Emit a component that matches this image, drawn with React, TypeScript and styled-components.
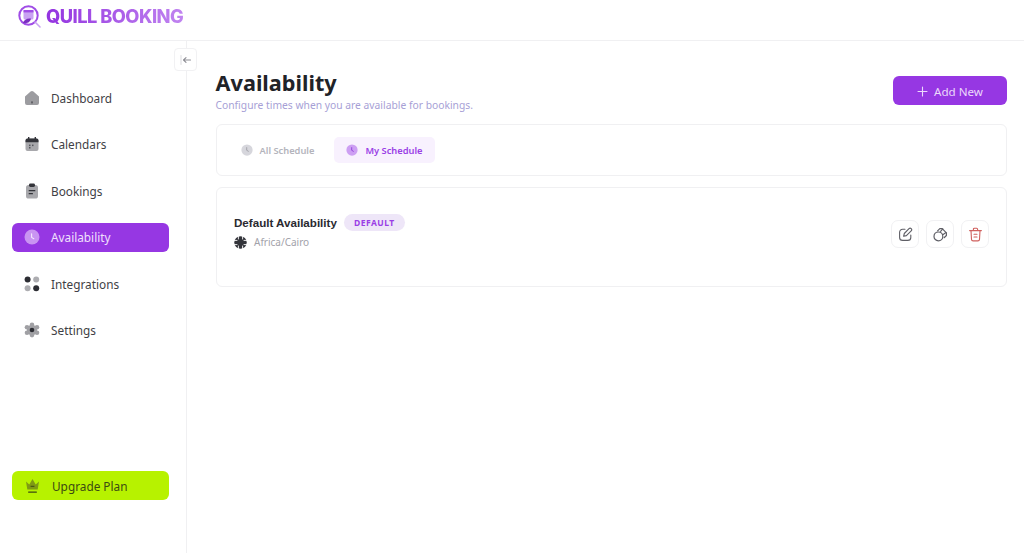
import React from 'react';
import styled, { createGlobalStyle } from 'styled-components';

const GlobalStyle = createGlobalStyle`
  html, body {
    margin: 0;
    padding: 0;
    background: #ffffff;
  }
  * {
    box-sizing: border-box;
  }
  body {
    font-family: 'Noto Sans', sans-serif;
  }
`;

const Page = styled.div`
  width: 1024px;
  height: 553px;
  display: flex;
  flex-direction: column;
  overflow: hidden;
`;
const Header = styled.header`
  height: 41px;
  flex: none;
  display: flex;
  align-items: flex-start;
  padding: 4px 0 0 17px;
  gap: 3px;
  border-bottom: 1px solid #f0f0f2;
`;
const LogoText = styled.span`
  font-family: 'Inter', sans-serif;
  font-weight: 800;
  font-size: 18.3px;
  line-height: 24px;
  letter-spacing: -0.55px;
  background: linear-gradient(90deg, #9333e0 0%, #c084f0 100%);
  -webkit-background-clip: text;
  background-clip: text;
  color: transparent;
`;
const Body = styled.div`
  flex: 1;
  display: flex;
  min-height: 0;
`;
const Sidebar = styled.aside`
  position: relative;
  width: 187px;
  flex: none;
  display: flex;
  flex-direction: column;
  justify-content: space-between;
  padding: 43px 17.5px 53px 12px;
  border-right: 1px solid #f0f0f2;
`;
const Collapse = styled.button`
  position: absolute;
  top: 7px;
  right: -11px;
  width: 23px;
  height: 23px;
  padding: 0;
  display: flex;
  align-items: center;
  justify-content: center;
  background: #ffffff;
  border: 1px solid #f1f1f3;
  border-radius: 4px;
`;
const Nav = styled.nav`
  display: flex;
  flex-direction: column;
  gap: 17.4px;
`;
const NavItem = styled.a<{ $active?: boolean }>`
  height: 29px;
  display: flex;
  align-items: center;
  gap: 11px;
  padding: 0 0 1px 12px;
  border-radius: 6px;
  font-size: 11.8px;
  color: ${(p) => (p.$active ? '#f0e0fc' : '#3f3f46')};
  background: ${(p) => (p.$active ? '#9637e3' : 'transparent')};
`;
const Upgrade = styled.a`
  height: 29px;
  display: flex;
  align-items: center;
  gap: 12px;
  padding-left: 13px;
  border-radius: 6px;
  font-size: 11.8px;
  color: #3c4a12;
  background: #b7f200;
`;
const Main = styled.main`
  flex: 1;
  padding: 27px 17px 0 28.5px;
  min-width: 0;
`;
const TitleRow = styled.div`
  display: flex;
  justify-content: space-between;
  align-items: flex-start;
  height: 56px;
`;
const Heading = styled.div`
  display: flex;
  flex-direction: column;
`;
const Title = styled.h1`
  margin: 0;
  font-size: 21.7px;
  line-height: 30px;
  font-weight: 700;
  color: #1f2328;
`;
const Subtitle = styled.p`
  margin: 0;
  font-size: 10.3px;
  line-height: 15px;
  color: #a79fd6;
`;
const AddButton = styled.button`
  width: 114px;
  height: 29px;
  margin-top: 8px;
  padding: 1px 0 0 0;
  display: flex;
  align-items: center;
  justify-content: center;
  gap: 6px;
  border: none;
  border-radius: 6px;
  background: #9637e3;
  color: #ecd9fb;
  font-family: 'Noto Sans', sans-serif;
  font-size: 11.6px;
`;
const Card = styled.section`
  background: #ffffff;
  border: 1px solid #f0f0f2;
  border-radius: 6px;
`;
const TabsCard = styled(Card)`
  height: 52px;
  display: flex;
  align-items: center;
  gap: 8px;
  padding-left: 12px;
`;
const Tab = styled.button<{ $active?: boolean }>`
  height: 26px;
  display: flex;
  align-items: center;
  gap: 7px;
  padding: 0 12px;
  border: none;
  border-radius: 5px;
  font-family: 'Noto Sans', sans-serif;
  font-size: 9.3px;
  font-weight: 600;
  color: ${(p) => (p.$active ? '#9a3fe6' : '#b4b4bc')};
  background: ${(p) => (p.$active ? '#f8f1fe' : 'transparent')};
`;
const ScheduleCard = styled(Card)`
  height: 100px;
  margin-top: 11px;
  display: flex;
  justify-content: space-between;
  align-items: flex-start;
  padding: 26px 17px 0 17.5px;
`;
const ScheduleInfo = styled.div`
  display: flex;
  flex-direction: column;
  gap: 4px;
`;
const NameRow = styled.div`
  display: flex;
  align-items: center;
  gap: 7px;
`;
const Name = styled.span`
  font-family: 'Liberation Sans', Arial, sans-serif;
  font-size: 11.6px;
  font-weight: 700;
  color: #2a2a30;
`;
const Badge = styled.span`
  height: 17px;
  width: 61px;
  display: flex;
  align-items: center;
  justify-content: center;
  border-radius: 9px;
  background: #eee6f8;
  color: #9a3fe6;
  font-size: 8.5px;
  font-weight: 700;
  letter-spacing: 0.5px;
`;
const ZoneRow = styled.div`
  display: flex;
  align-items: center;
  gap: 7px;
  font-size: 10px;
  color: #a2a2aa;
`;
const Actions = styled.div`
  display: flex;
  align-items: center;
  gap: 7px;
  margin-top: 6px;
`;
const IconButton = styled.button`
  width: 28px;
  height: 28px;
  padding: 0;
  display: flex;
  align-items: center;
  justify-content: center;
  background: #ffffff;
  border: 1px solid #f1f1f3;
  border-radius: 7px;
`;

function LogoMark() {
  return (
    <svg width="26" height="26" viewBox="0 0 26 26" fill="none">
      <circle cx="11.5" cy="11.5" r="9.2" stroke="#a04de6" strokeWidth="2" />
      <rect x="6.5" y="6" width="10" height="9.5" rx="1.5" fill="#c9a2f2" />
      <rect x="6.5" y="6" width="10" height="2.4" fill="#a04de6" />
      <path d="M6 19c1-3.5 4-5 8-4.5-.5 3-3 5.5-8 4.5Z" fill="#7b2fc0" />
      <path d="M18 18l5 5" stroke="#c9a2f2" strokeWidth="1.6" strokeLinecap="round" />
    </svg>
  );
}

function ClockIcon({ bg, hand, size = 16 }: { bg: string; hand: string; size?: number }) {
  return (
    <svg width={size} height={size} viewBox="0 0 16 16" fill="none">
      <circle cx="8" cy="8" r="7.5" fill={bg} />
      <path d="M7.6 4.8v3.6l2.2 1.3" stroke={hand} strokeWidth="1.1" strokeLinecap="round" strokeLinejoin="round" />
    </svg>
  );
}

function HomeIcon() {
  return (
    <svg width="16" height="16" viewBox="0 0 16 16">
      <path d="M1 6.6 6.6 1.6a2 2 0 0 1 2.8 0L15 6.6V13a2 2 0 0 1-2 2H3a2 2 0 0 1-2-2Z" fill="#9c9ca0" />
      <rect x="7.4" y="11.4" width="1.2" height="2" fill="#3f3f46" />
    </svg>
  );
}

function CalendarIcon() {
  return (
    <svg width="16" height="16" viewBox="0 0 16 16">
      <rect x="1.5" y="2.5" width="13" height="12.5" rx="2" fill="#a8a8ac" />
      <path d="M1.5 6.2V4.4a2 2 0 0 1 2-2h9a2 2 0 0 1 2 2v1.8Z" fill="#33343a" />
      <rect x="4" y="1" width="1.4" height="3" fill="#33343a" />
      <rect x="10.6" y="1" width="1.4" height="3" fill="#33343a" />
      <rect x="5" y="8.6" width="1.5" height="1.5" fill="#55565c" />
      <rect x="8" y="8.6" width="1.5" height="1.5" fill="#55565c" />
      <rect x="5" y="11" width="1.5" height="1.5" fill="#55565c" />
    </svg>
  );
}

function ClipboardIcon() {
  return (
    <svg width="16" height="16" viewBox="0 0 16 16">
      <rect x="2" y="2" width="12" height="13.5" rx="2.6" fill="#a8a8ac" />
      <rect x="5" y="0.5" width="6" height="3.4" rx="1.4" fill="#33343a" />
      <rect x="4.6" y="7" width="6.8" height="1.3" rx="0.6" fill="#33343a" />
      <rect x="4.6" y="10" width="4.4" height="1.3" rx="0.6" fill="#33343a" />
    </svg>
  );
}

function GridIcon() {
  return (
    <svg width="16" height="16" viewBox="0 0 16 16">
      <circle cx="3.6" cy="3.6" r="3" fill="#2c2d33" />
      <circle cx="12.2" cy="3.6" r="3" fill="#adadb1" />
      <circle cx="3.6" cy="12.2" r="3" fill="#adadb1" />
      <circle cx="12.2" cy="12.2" r="3" fill="#2c2d33" />
    </svg>
  );
}

function GearIcon() {
  return (
    <svg width="16" height="16" viewBox="0 0 16 16">
      <circle cx="8" cy="8" r="5.2" fill="#a0a0a4" />
      <circle cx="8" cy="2.9" r="2.3" fill="#a0a0a4" />
      <circle cx="8" cy="13.1" r="2.3" fill="#a0a0a4" />
      <circle cx="3" cy="5.2" r="2.3" fill="#a0a0a4" />
      <circle cx="13" cy="5.2" r="2.3" fill="#a0a0a4" />
      <circle cx="3" cy="10.8" r="2.3" fill="#a0a0a4" />
      <circle cx="13" cy="10.8" r="2.3" fill="#a0a0a4" />
      <circle cx="8" cy="8" r="2.3" fill="#2c2d33" />
    </svg>
  );
}

function CrownIcon() {
  return (
    <svg width="15" height="16" viewBox="0 0 15 16">
      <path d="M1 3.6 4.3 6.4 7.5 1l3.2 5.4L14 3.6l-1.3 8H2.3Z" fill="#7f9a14" />
      <rect x="5.6" y="7.8" width="3.8" height="1" fill="#3c4a12" />
      <rect x="3" y="13.4" width="9" height="1.3" rx="0.6" fill="#3c4a12" />
    </svg>
  );
}

function CollapseIcon() {
  return (
    <svg width="12" height="12" viewBox="0 0 12 12" fill="none" stroke="#8d8d94" strokeLinecap="round" strokeLinejoin="round">
      <path d="M1 1.5v9" strokeWidth="0.6" stroke="#c4c4ca" />
      <path d="M10.5 6H3.5M6 3.6 3.5 6 6 8.4" strokeWidth="1.1" />
    </svg>
  );
}

function PlusIcon() {
  return (
    <svg width="11" height="11" viewBox="0 0 11 11" stroke="#ecd9fb" strokeWidth="1.1" strokeLinecap="round">
      <path d="M5.5 1v9M1 5.5h9" />
    </svg>
  );
}

function GlobeIcon() {
  return (
    <svg width="13" height="13" viewBox="0 0 13 13">
      <circle cx="6.5" cy="6.5" r="6.2" fill="#33343a" />
      <path d="M4.4 0v3.4M8.6 0v3.4M4.4 9.6V13M8.6 9.6V13M0 4.4h3.4M0 8.6h3.4M9.6 4.4H13M9.6 8.6H13" stroke="#ffffff" strokeWidth="0.9" />
    </svg>
  );
}

function EditIcon() {
  return (
    <svg width="15" height="15" viewBox="0 0 15 15" fill="none" stroke="#5f5f66" strokeWidth="1.1" strokeLinecap="round" strokeLinejoin="round">
      <path d="M7 2.2H4.6a3 3 0 0 0-3 3v5.2a3 3 0 0 0 3 3h5.2a3 3 0 0 0 3-3V8" />
      <path d="M11 1.6a1.5 1.5 0 0 1 2.2 2.2L8.4 8.6l-2.8.7.7-2.8Z" />
    </svg>
  );
}

function CopyIcon() {
  return (
    <svg width="15" height="15" viewBox="0 0 15 15" fill="none" stroke="#5f5f66" strokeWidth="1.2" strokeLinecap="round" strokeLinejoin="round">
      <circle cx="5.4" cy="9.4" r="4.4" />
      <path d="M4.6 3.9 6.8 1.6h2.4l4.2 4.2v2.7l-2.3 2.2" />
      <path d="M7.6 4.4 9.8 1.9M10.2 7.4l2.8-1.8" />
    </svg>
  );
}

function TrashIcon() {
  return (
    <svg width="15" height="15" viewBox="0 0 15 15" fill="none" stroke="#d0605e" strokeWidth="1.1" strokeLinecap="round" strokeLinejoin="round">
      <path d="M1.6 3.6h11.8M5.4 3.4V2.2a1 1 0 0 1 1-1h2.2a1 1 0 0 1 1 1v1.2" />
      <path d="M3 3.8l.5 8.6a1.6 1.6 0 0 0 1.6 1.5h4.8a1.6 1.6 0 0 0 1.6-1.5l.5-8.6" />
      <path d="M6 7.2h3M6 10h3" />
    </svg>
  );
}

const navItems = [
  { label: 'Dashboard', icon: <HomeIcon /> },
  { label: 'Calendars', icon: <CalendarIcon /> },
  { label: 'Bookings', icon: <ClipboardIcon /> },
  { label: 'Availability', icon: <ClockIcon bg="#c994f2" hand="#f5e9fd" />, active: true },
  { label: 'Integrations', icon: <GridIcon /> },
  { label: 'Settings', icon: <GearIcon /> },
];

export default function App() {
  return (
    <Page>
      <GlobalStyle />
      <Header>
        <LogoMark />
        <LogoText>QUILL BOOKING</LogoText>
      </Header>
      <Body>
        <Sidebar>
          <Collapse>
            <CollapseIcon />
          </Collapse>
          <Nav>
            {navItems.map((item) => (
              <NavItem key={item.label} $active={item.active}>
                {item.icon}
                {item.label}
              </NavItem>
            ))}
          </Nav>
          <Upgrade>
            <CrownIcon />
            Upgrade Plan
          </Upgrade>
        </Sidebar>
        <Main>
          <TitleRow>
            <Heading>
              <Title>Availability</Title>
              <Subtitle>Configure times when you are available for bookings.</Subtitle>
            </Heading>
            <AddButton>
              <PlusIcon />
              Add New
            </AddButton>
          </TitleRow>
          <TabsCard>
            <Tab>
              <ClockIcon bg="#d6d6dc" hand="#9a9aa2" size={12} />
              All Schedule
            </Tab>
            <Tab $active>
              <ClockIcon bg="#cd9ff3" hand="#8a35d6" size={12} />
              My Schedule
            </Tab>
          </TabsCard>
          <ScheduleCard>
            <ScheduleInfo>
              <NameRow>
                <Name>Default Availability</Name>
                <Badge>DEFAULT</Badge>
              </NameRow>
              <ZoneRow>
                <GlobeIcon />
                Africa/Cairo
              </ZoneRow>
            </ScheduleInfo>
            <Actions>
              <IconButton>
                <EditIcon />
              </IconButton>
              <IconButton>
                <CopyIcon />
              </IconButton>
              <IconButton>
                <TrashIcon />
              </IconButton>
            </Actions>
          </ScheduleCard>
        </Main>
      </Body>
    </Page>
  );
}
